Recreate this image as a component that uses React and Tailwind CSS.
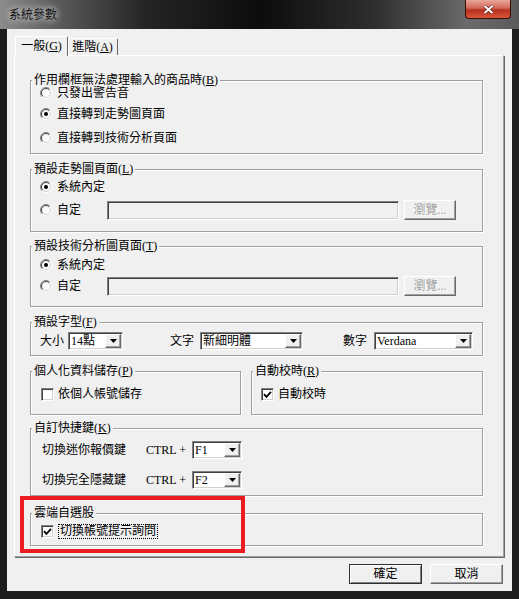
import React from "react";

const sunken =
  "border border-t-[#808080] border-l-[#808080] border-b-white border-r-white shadow-[inset_1px_1px_0_#404040,inset_-1px_-1px_0_#d4d0c8]";
const raised =
  "border border-t-white border-l-white border-b-[#696969] border-r-[#696969] shadow-[inset_-1px_-1px_0_#a0a0a0]";

function Key({ k }) {
  return (
    <>
      (<span className="underline">{k}</span>)
    </>
  );
}

function Group({ label, className = "", children }) {
  return (
    <fieldset
      className={`min-w-0 border border-[#a0a0a0] shadow-[inset_1px_1px_0_#fff,1px_1px_0_#fff] ${className}`}
    >
      <legend className="ml-[1px] bg-[#f0f0f0] px-[2px] text-[12px] leading-[12px]">{label}</legend>
      {children}
    </fieldset>
  );
}

function Radio({ checked }) {
  return (
    <svg width="12" height="12" viewBox="0 0 12 12" className="shrink-0">
      <circle cx="6" cy="6" r="5" fill="#fbfbfb" />
      <path d="M2.1 9.9A5.5 5.5 0 0 1 9.9 2.1" fill="none" stroke="#808080" />
      <path d="M2.8 9.2A4.5 4.5 0 0 1 9.2 2.8" fill="none" stroke="#404040" />
      <path d="M9.9 2.1A5.5 5.5 0 0 1 2.1 9.9" fill="none" stroke="#fff" />
      <path d="M9.2 2.8A4.5 4.5 0 0 1 2.8 9.2" fill="none" stroke="#d4d0c8" />
      {checked && <circle cx="6" cy="6" r="2" fill="#000" />}
    </svg>
  );
}

function RadioRow({ checked, label, className = "" }) {
  return (
    <div className={`flex h-[14px] items-center gap-[5px] ${className}`}>
      <Radio checked={checked} />
      <span className="leading-[14px]">{label}</span>
    </div>
  );
}

function Check({ checked }) {
  return (
    <span className={`flex h-[13px] w-[13px] shrink-0 items-center justify-center bg-white ${sunken}`}>
      {checked && (
        <svg width="9" height="9" viewBox="0 0 9 9">
          <path d="M1 4.2 3.4 6.8 8 1.8" fill="none" stroke="#000" strokeWidth="1.8" />
        </svg>
      )}
    </span>
  );
}

function Combo({ value, className = "" }) {
  return (
    <div className={`flex h-[18px] items-center bg-white ${sunken} ${className}`}>
      <span className="flex-1 truncate pl-[2px] leading-[14px]">{value}</span>
      <span className={`mr-[1px] flex h-[14px] w-[16px] items-center justify-center bg-[#f0f0f0] ${raised}`}>
        <svg width="7" height="4" viewBox="0 0 7 4">
          <polygon points="0,0 7,0 3.5,4" fill="#000" />
        </svg>
      </span>
    </div>
  );
}

function PathRow({ className = "" }) {
  return (
    <div className={`flex h-[20px] items-center ${className}`}>
      <div className="flex w-[67px] items-center gap-[5px]">
        <Radio />
        <span className="leading-[14px]">自定</span>
      </div>
      <div className={`h-[19px] w-[292px] bg-[#f0f0f0] ${sunken}`} />
      <div
        className={`ml-[5px] flex h-[20px] w-[52px] items-center justify-center bg-[#f0f0f0] text-[#a0a0a0] [text-shadow:1px_1px_0_#fff] ${raised}`}
      >
        瀏覽...
      </div>
    </div>
  );
}

export default function App() {
  return (
    <div className="flex h-[599px] w-[519px] flex-col overflow-hidden bg-[#1c1c1c] font-['Liberation_Serif','Noto_Sans_CJK_TC',serif] text-[12px] text-black">
      {/* title bar */}
      <div className="flex h-[29px] shrink-0 items-start justify-between bg-[linear-gradient(90deg,#8c8c8c_0%,#5e5e5e_10%,#252525_28%,#0c0c0c_50%,#2e2e2e_72%,#6a6a6a_90%,#5a5a5a_100%)]">
        <span className="ml-[9px] mt-[8px] leading-[14px] text-[#111] [text-shadow:0_0_6px_#ddd,0_0_10px_#bbb]">
          系統參數
        </span>
        <div className="mr-[8px] flex h-[19px] w-[46px] items-center justify-center rounded-b-[4px] border border-t-0 border-[#3a0e08] bg-[linear-gradient(180deg,#e9a79a_0%,#d0685a_45%,#b8301d_55%,#d9563c_100%)]">
          <svg width="11" height="9" viewBox="0 0 11 9">
            <path d="M1.5 1 9.5 8M9.5 1 1.5 8" stroke="#5a1a10" strokeWidth="3.2" />
            <path d="M1.5 1 9.5 8M9.5 1 1.5 8" stroke="#fff" strokeWidth="2" />
          </svg>
        </div>
      </div>

      {/* client */}
      <div className="mx-[7px] flex h-[562px] shrink-0 flex-col bg-[#f0f0f0] px-[7px] pt-[7px]">
        <div className="ml-[1px] flex h-[20px] items-end">
          <div className="relative z-10 flex h-[20px] w-[53px] items-center justify-center rounded-t-[2px] border-l border-r border-t border-l-white border-r-[#696969] border-t-white bg-[#f0f0f0] pb-[1px] leading-[14px]">
            一般<Key k="G" />
          </div>
          <div className="mb-[1px] flex h-[17px] w-[50px] items-center justify-center rounded-t-[2px] border-r border-t border-r-[#696969] border-t-white leading-[14px] shadow-[inset_1px_0_0_#fff]">
            進階<Key k="A" />
          </div>
        </div>

        <div className="relative -mt-[1px] h-[502px] w-[490px] border border-b-[#a0a0a0] border-l-white border-r-[#a0a0a0] border-t-white pl-[15px] pt-[18px] shadow-[1px_1px_0_#696969]">
          <Group label={<>作用欄框無法處理輸入的商品時<Key k="B" /></>} className="h-[80px] w-[453px]">
            <div className="pl-[9px]">
              <RadioRow label="只發出警告音" />
              <RadioRow checked label="直接轉到走勢圖頁面" className="mt-[7px]" />
              <RadioRow label="直接轉到技術分析頁面" className="mt-[10px]" />
            </div>
          </Group>

          <Group label={<>預設走勢圖頁面<Key k="L" /></>} className="mt-[9px] h-[69px] w-[453px]">
            <div className="pl-[9px]">
              <RadioRow checked label="系統內定" className="mt-[5px]" />
              <PathRow className="mt-[6px]" />
            </div>
          </Group>

          <Group label={<>預設技術分析圖頁面<Key k="T" /></>} className="mt-[8px] h-[67px] w-[453px]">
            <div className="pl-[9px]">
              <RadioRow checked label="系統內定" className="mt-[6px]" />
              <PathRow className="mt-[4px]" />
            </div>
          </Group>

          <Group label={<>預設字型<Key k="F" /></>} className="mt-[9px] h-[40px] w-[453px]">
            <div className="mt-[4px] flex h-[18px] items-center pl-[9px]">
              <span className="w-[28px] leading-[14px]">大小</span>
              <Combo value="14點" className="w-[55px]" />
              <span className="ml-[47px] w-[30px] leading-[14px]">文字</span>
              <Combo value="新細明體" className="w-[103px]" />
              <span className="ml-[40px] w-[31px] leading-[14px]">數字</span>
              <Combo value="Verdana" className="w-[99px]" />
            </div>
          </Group>

          <div className="mt-[9px] flex w-[453px] gap-[10px]">
            <Group label={<>個人化資料儲存<Key k="P" /></>} className="h-[50px] w-[211px]">
              <div className="mt-[10px] flex h-[14px] items-center gap-[4px] pl-[10px]">
                <Check />
                <span className="leading-[14px]">依個人帳號儲存</span>
              </div>
            </Group>
            <Group label={<>自動校時<Key k="R" /></>} className="h-[50px] w-[232px]">
              <div className="mt-[10px] flex h-[14px] items-center gap-[4px] pl-[9px]">
                <Check checked />
                <span className="leading-[14px]">自動校時</span>
              </div>
            </Group>
          </div>

          <Group label={<>自訂快捷鍵<Key k="K" /></>} className="mt-[7px] h-[74px] w-[453px]">
            <div className="pl-[11px]">
              <div className="mt-[7px] flex h-[18px] items-center">
                <span className="w-[104px] leading-[14px]">切換迷你報價鍵</span>
                <span className="w-[46px] leading-[14px]">CTRL +</span>
                <Combo value="F1" className="w-[50px]" />
              </div>
              <div className="mt-[12px] flex h-[18px] items-center">
                <span className="w-[104px] leading-[14px]">切換完全隱藏鍵</span>
                <span className="w-[46px] leading-[14px]">CTRL +</span>
                <Combo value="F2" className="w-[50px]" />
              </div>
            </div>
          </Group>

          <Group label="雲端自選股" className="mt-[11px] h-[39px] w-[453px]">
            <div className="mt-[5px] flex h-[14px] items-center gap-[4px] pl-[10px]">
              <Check checked />
              <span className="border border-dotted border-black px-[1px] leading-[13px]">切換帳號提示詢問</span>
            </div>
          </Group>

          {/* highlight box drawn over the panel */}
          <div className="pointer-events-none absolute left-[5px] top-[440px] h-[57px] w-[225px] border-4 border-[#ec1c24]" />
        </div>

        <div className="mt-[7px] flex justify-end gap-[8px] pr-[2px]">
          <div className="flex h-[20px] w-[73px] items-center justify-center border border-[#303030] bg-[#f0f0f0] leading-[14px] shadow-[inset_1px_1px_0_#fff,inset_-1px_-1px_0_#808080]">
            確定
          </div>
          <div className={`flex h-[20px] w-[73px] items-center justify-center bg-[#f0f0f0] leading-[14px] ${raised}`}>
            取消
          </div>
        </div>
      </div>
    </div>
  );
}
